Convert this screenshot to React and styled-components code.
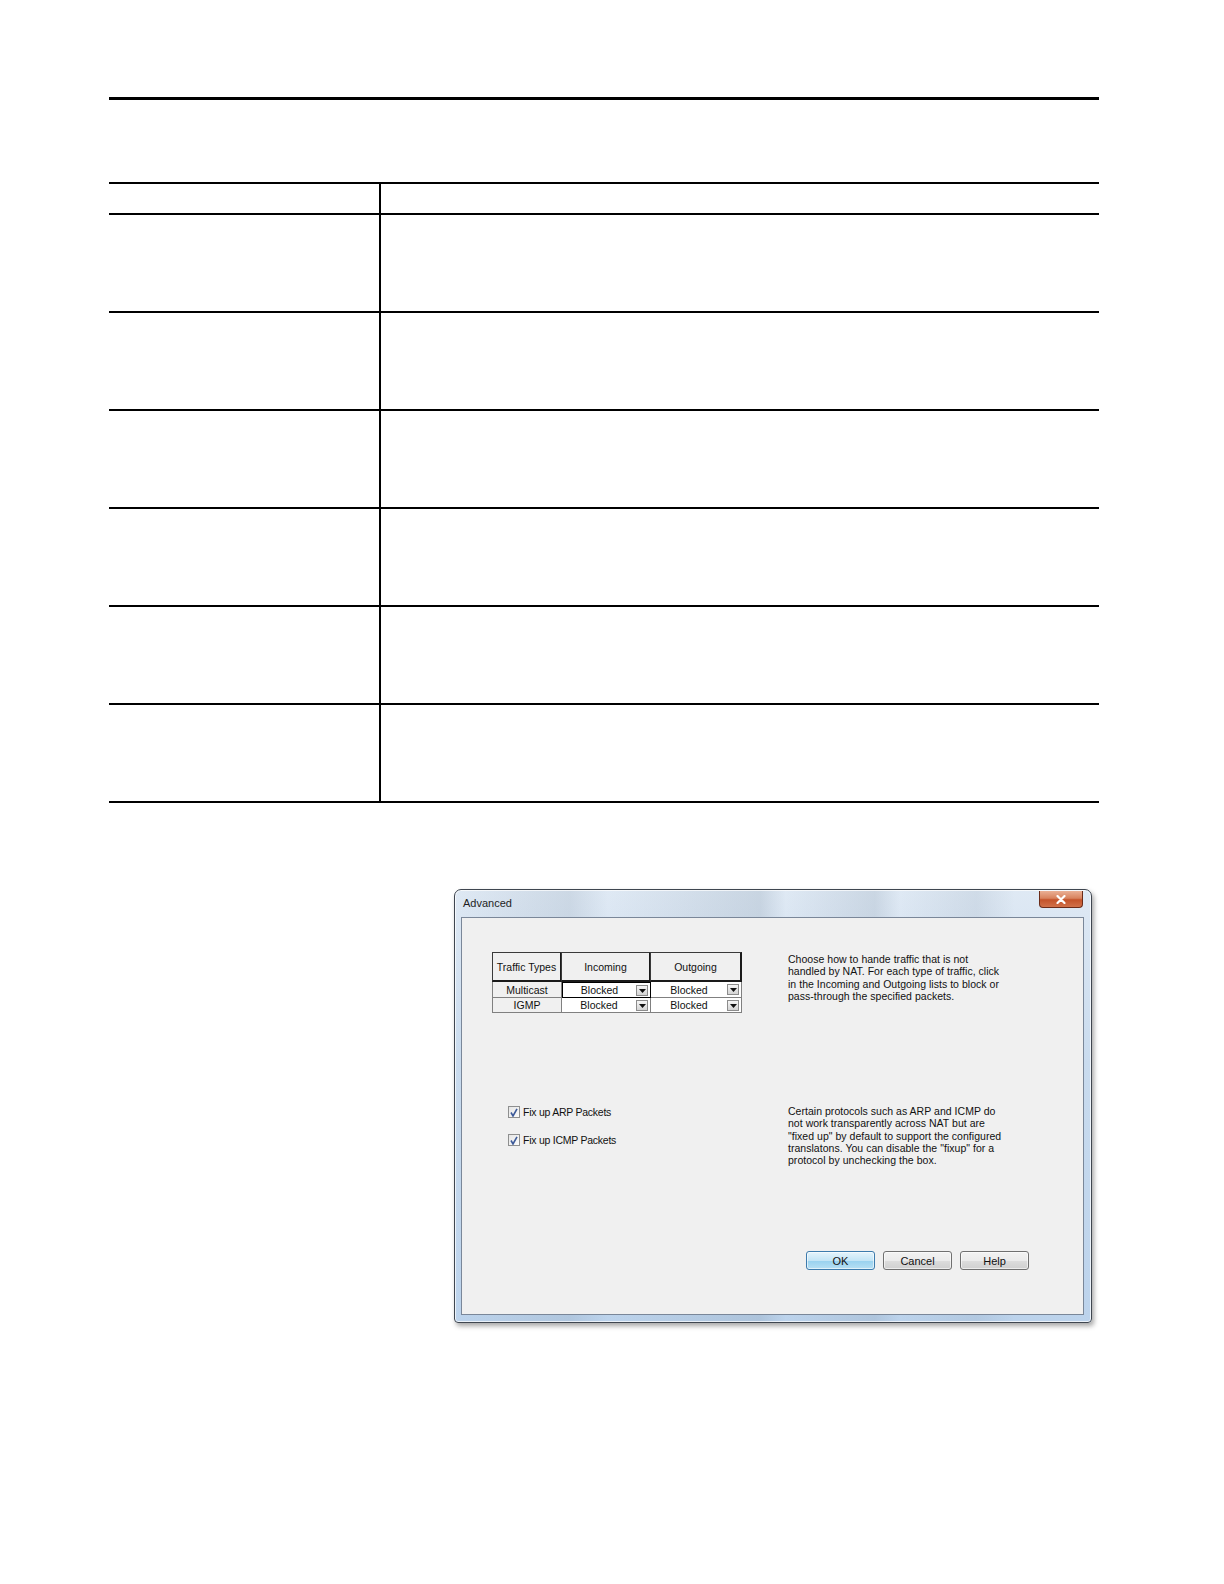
import React from "react";
import styled, { createGlobalStyle } from "styled-components";

const GlobalStyle = createGlobalStyle`
  html, body {
    margin: 0;
    padding: 0;
    background: #fff;
    overflow: hidden;
  }
  body {
    font-family: "Liberation Sans", Arial, sans-serif;
  }
`;

const Page = styled.div`
  width: 1224px;
  height: 1500px;
  box-sizing: border-box;
  padding: 97px 125px 0 109px;
  background: #fff;
`;

const TopRule = styled.div`
  height: 3px;
  background: #000;
`;

const DocTable = styled.div`
  margin-top: 82px;
  border-top: 2px solid #000;
`;

const DocRow = styled.div`
  display: grid;
  grid-template-columns: 272px 1fr;
  height: ${(p) => p.$h}px;
  border-bottom: 2px solid #000;
`;

const DocCell = styled.div`
  border-right: ${(p) => (p.$first ? "2px solid #000" : "none")};
`;

const DialogWrap = styled.div`
  margin-top: 86px;
  margin-left: 345px;
  width: 638px;
`;

const Frame = styled.div`
  width: 638px;
  height: 434px;
  box-sizing: border-box;
  border: 1px solid #3f4650;
  border-radius: 7px 7px 4px 4px;
  background: linear-gradient(
      90deg,
      rgba(255, 255, 255, 0) 0%,
      rgba(120, 140, 160, 0.18) 18%,
      rgba(255, 255, 255, 0) 24%,
      rgba(120, 140, 160, 0.22) 48%,
      rgba(255, 255, 255, 0) 52%,
      rgba(120, 140, 160, 0.2) 66%,
      rgba(255, 255, 255, 0) 70%,
      rgba(120, 140, 160, 0.15) 82%,
      rgba(255, 255, 255, 0) 88%
    ),
    linear-gradient(180deg, #dfe9f4 0%, #c9dbee 40%, #bcd3ec 100%);
  box-shadow: 2px 3px 5px rgba(0, 0, 0, 0.35), inset 0 0 0 1px rgba(255, 255, 255, 0.7);
  display: flex;
  flex-direction: column;
  padding: 0 7px 7px 6px;
`;

const TitleBar = styled.div`
  height: 27px;
  display: flex;
  align-items: flex-start;
  justify-content: space-between;
`;

const Title = styled.span`
  margin-top: 7px;
  margin-left: 2px;
  font-size: 11px;
  color: #1e1e1e;
`;

const CloseBtn = styled.div`
  width: 44px;
  height: 17px;
  margin-top: 1px;
  margin-right: 1px;
  box-sizing: border-box;
  border: 1px solid #6b2b18;
  border-top: none;
  border-radius: 0 0 4px 4px;
  background: linear-gradient(180deg, #eab095 0%, #d8835e 45%, #c4532a 55%, #d1714a 100%);
  display: flex;
  align-items: center;
  justify-content: center;
`;

const Client = styled.div`
  flex: 1;
  border: 1px solid #7a8799;
  background: #f0f0f0;
  box-sizing: border-box;
  padding: 34px 0 0 30px;
  display: flex;
  flex-direction: column;
`;

const Section = styled.div`
  display: grid;
  grid-template-columns: 296px 1fr;
  height: ${(p) => p.$h}px;
  align-items: start;
`;

const Note = styled.p`
  margin: ${(p) => p.$top || 0}px 0 0 0;
  font-size: 10.5px;
  line-height: 12.3px;
  letter-spacing: 0.03px;
  color: #111;
  white-space: nowrap;
`;

const TrafficGrid = styled.div`
  display: grid;
  grid-template-columns: 70px 89px 91px;
  grid-template-rows: 30px 16px 15px;
  font-size: 10.5px;
  color: #111;
`;

const HeadCell = styled.div`
  box-sizing: border-box;
  border: 1px solid #3a3a3a;
  border-right: 2px solid #1a1a1a;
  border-bottom: 2px solid #1a1a1a;
  margin-left: ${(p) => (p.$first ? 0 : -1)}px;
  background: #f0f0f0;
  display: flex;
  align-items: center;
  justify-content: center;
`;

const NameCell = styled.div`
  box-sizing: border-box;
  border-left: 1px solid #808080;
  border-right: 1px solid #808080;
  border-bottom: 1px solid #808080;
  background: #f0f0f0;
  display: flex;
  align-items: center;
  justify-content: center;
`;

const ValueCell = styled.div`
  box-sizing: border-box;
  border: ${(p) => (p.$focus ? "1px solid #000" : "none")};
  border-right: 1px solid ${(p) => (p.$focus ? "#000" : "#808080")};
  border-bottom: 1px solid ${(p) => (p.$focus ? "#000" : "#808080")};
  background: #fff;
  display: flex;
  align-items: center;
  padding-right: 2px;
`;

const ValueText = styled.span`
  flex: 1;
  text-align: center;
`;

const DropBtn = styled.div`
  width: 12px;
  height: 11px;
  box-sizing: border-box;
  border: 1px solid #8c8c8c;
  background: linear-gradient(180deg, #f6f6f6 0%, #d4d4d4 100%);
  display: flex;
  align-items: flex-end;
  justify-content: center;
  padding-bottom: 1px;
`;

const CheckList = styled.div`
  margin-left: 16px;
  padding-top: 0;
  display: flex;
  flex-direction: column;
  gap: 14px;
`;

const CheckRow = styled.label`
  display: flex;
  align-items: center;
  gap: 3px;
  height: 14px;
  font-size: 10.5px;
  letter-spacing: -0.25px;
  color: #111;
`;

const Box = styled.span`
  width: 12px;
  height: 12px;
  box-sizing: border-box;
  border: 1px solid #8e8f8f;
  background: linear-gradient(135deg, #e6e6e6 0%, #fbfbfb 100%);
  display: flex;
  align-items: center;
  justify-content: center;
`;

const Buttons = styled.div`
  display: flex;
  gap: 8px;
  margin-left: 314px;
`;

const Btn = styled.div`
  width: 69px;
  height: 19px;
  box-sizing: border-box;
  border: 1px solid ${(p) => (p.$primary ? "#3d7bad" : "#707070")};
  border-radius: 3px;
  background: ${(p) =>
    p.$primary
      ? "linear-gradient(180deg, #e5f4fc 0%, #c4e5f6 50%, #98d1ef 51%, #b7e0f4 100%)"
      : "linear-gradient(180deg, #f2f2f2 0%, #ebebeb 50%, #dddddd 51%, #cfcfcf 100%)"};
  box-shadow: inset 0 0 0 1px rgba(255, 255, 255, 0.6);
  display: flex;
  align-items: center;
  justify-content: center;
  font-size: 11px;
  color: #111;
`;

const Check = () => (
  <svg width="8" height="9" viewBox="0 0 8 9">
    <path d="M1 4.5 L3 8 L7 0.8" fill="none" stroke="#3d5a99" strokeWidth="1.6" />
  </svg>
);

const Arrow = () => (
  <svg width="7" height="5" viewBox="0 0 7 5">
    <path d="M0 0 H7 L3.5 4 Z" fill="#111" />
  </svg>
);

const rows = [
  { name: "Multicast", focus: true },
  { name: "IGMP", focus: false },
];

const Advanced = () => (
  <Frame>
    <TitleBar>
      <Title>Advanced</Title>
      <CloseBtn>
        <svg width="10" height="9" viewBox="0 0 10 9">
          <path d="M1.5 1 L8.5 8 M8.5 1 L1.5 8" stroke="#fff" strokeWidth="2.2" strokeLinecap="round" />
        </svg>
      </CloseBtn>
    </TitleBar>
    <Client>
      <Section $h={153}>
        <TrafficGrid>
          <HeadCell $first>Traffic Types</HeadCell>
          <HeadCell>Incoming</HeadCell>
          <HeadCell>Outgoing</HeadCell>
          {rows.map((r) => (
            <React.Fragment key={r.name}>
              <NameCell>{r.name}</NameCell>
              <ValueCell $focus={r.focus}>
                <ValueText>Blocked</ValueText>
                <DropBtn>
                  <Arrow />
                </DropBtn>
              </ValueCell>
              <ValueCell>
                <ValueText>Blocked</ValueText>
                <DropBtn>
                  <Arrow />
                </DropBtn>
              </ValueCell>
            </React.Fragment>
          ))}
        </TrafficGrid>
        <Note $top={1}>
          Choose how to hande traffic that is not
          <br />
          handled by NAT. For each type of traffic, click
          <br />
          in the Incoming and Outgoing lists to block or
          <br />
          pass-through the specified packets.
        </Note>
      </Section>
      <Section $h={146}>
        <CheckList>
          <CheckRow>
            <Box>
              <Check />
            </Box>
            Fix up ARP Packets
          </CheckRow>
          <CheckRow>
            <Box>
              <Check />
            </Box>
            Fix up ICMP Packets
          </CheckRow>
        </CheckList>
        <Note>
          Certain protocols such as ARP and ICMP do
          <br />
          not work transparently across NAT but are
          <br />
          "fixed up" by default to support the configured
          <br />
          translatons. You can disable the "fixup" for a
          <br />
          protocol by unchecking the box.
        </Note>
      </Section>
      <Buttons>
        <Btn $primary>OK</Btn>
        <Btn>Cancel</Btn>
        <Btn>Help</Btn>
      </Buttons>
    </Client>
  </Frame>
);

const App = () => (
  <>
    <GlobalStyle />
    <Page>
      <TopRule />
      <DocTable>
        <DocRow $h={29}>
          <DocCell $first />
          <DocCell />
        </DocRow>
        {[0, 1, 2, 3, 4, 5].map((i) => (
          <DocRow key={i} $h={96}>
            <DocCell $first />
            <DocCell />
          </DocRow>
        ))}
      </DocTable>
      <DialogWrap>
        <Advanced />
      </DialogWrap>
    </Page>
  </>
);

export default App;
